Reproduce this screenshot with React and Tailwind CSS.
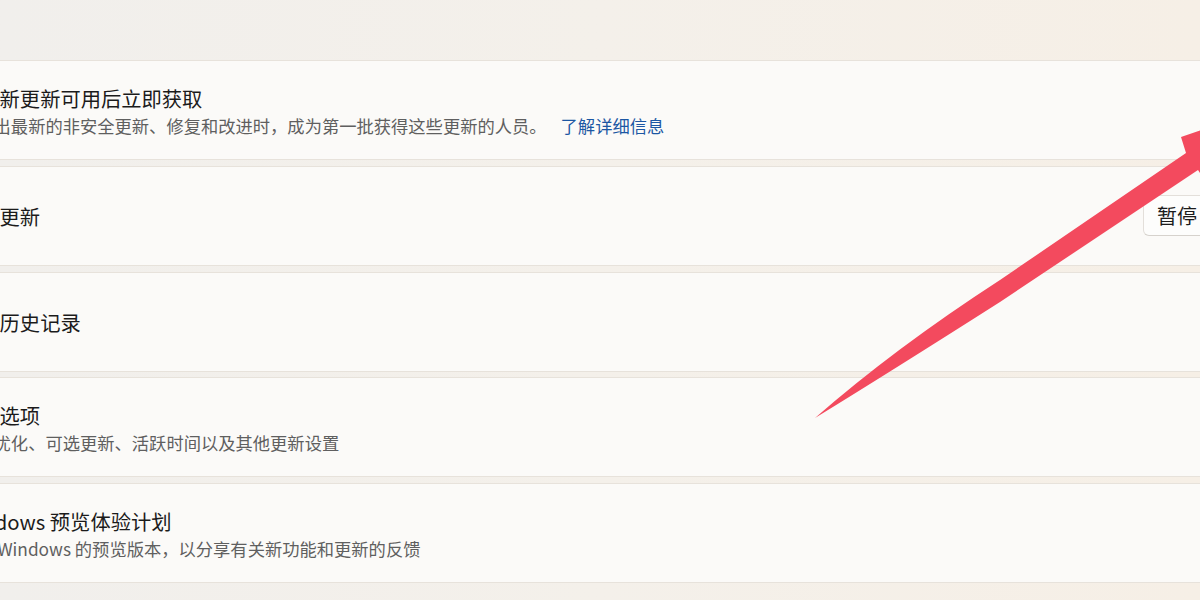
import React from 'react';

const font = { fontFamily: '"Noto Sans CJK SC", "Noto Sans", sans-serif' };

function Card({ title, sub, link, children }) {
  return (
    <div className="h-[100px] rounded-[6px] border border-[#e7e2db] bg-[#fbfaf8] pl-[18px] pr-[22px] flex items-center">
      <div className={`flex flex-col ${sub ? 'pt-[3px]' : ''}`}>
        <div className="text-[20.3px] leading-[28px] text-[#1b1b1b] whitespace-nowrap">{title}</div>
        {sub && (
          <div className="text-[17.3px] leading-[27px] text-[#5f5f5f] whitespace-nowrap">
            {sub}
            {link && <span className="ml-[14px] text-[#1c57a3]">{link}</span>}
          </div>
        )}
      </div>
      {children}
    </div>
  );
}

function Arrow() {
  return (
    <svg className="absolute left-0 top-0 pointer-events-none" width="1200" height="600" viewBox="0 0 1200 600">
      <path
        fill="#f34a5e"
        d="M815,418 Q895,348 1000,280 L1186,153 L1181,137 L1240,117 L1216,196 L1198,170 L1000,302 Q890,372 815,418 Z"
      />
    </svg>
  );
}

export default function App() {
  return (
    <div style={font} className="relative w-[1200px] h-[600px] overflow-hidden bg-gradient-to-r from-[#f1efec] via-[#f4f0ea] to-[#f6efe6]">
      <div className="ml-[-60px] w-[1332px] pt-[60px] flex flex-col gap-[5.75px]">
        <Card
          title="在最新更新可用后立即获取"
          sub="在推出最新的非安全更新、修复和改进时，成为第一批获得这些更新的人员。"
          link="了解详细信息"
        />
        <Card title="暂停更新">
          <button className="ml-auto w-[106px] h-[41px] rounded-[6px] border border-[#e3dfda] border-b-[#d6d2cd] bg-[#fdfdfc] text-[20px] text-[#1b1b1b] text-left pl-[13px] whitespace-nowrap">
            暂停 1 周
          </button>
        </Card>
        <Card title="更新历史记录" />
        <Card title="高级选项" sub="传递优化、可选更新、活跃时间以及其他更新设置" />
        <Card title="Windows 预览体验计划" sub="获取 Windows 的预览版本，以分享有关新功能和更新的反馈" />
      </div>
      <Arrow />
    </div>
  );
}
